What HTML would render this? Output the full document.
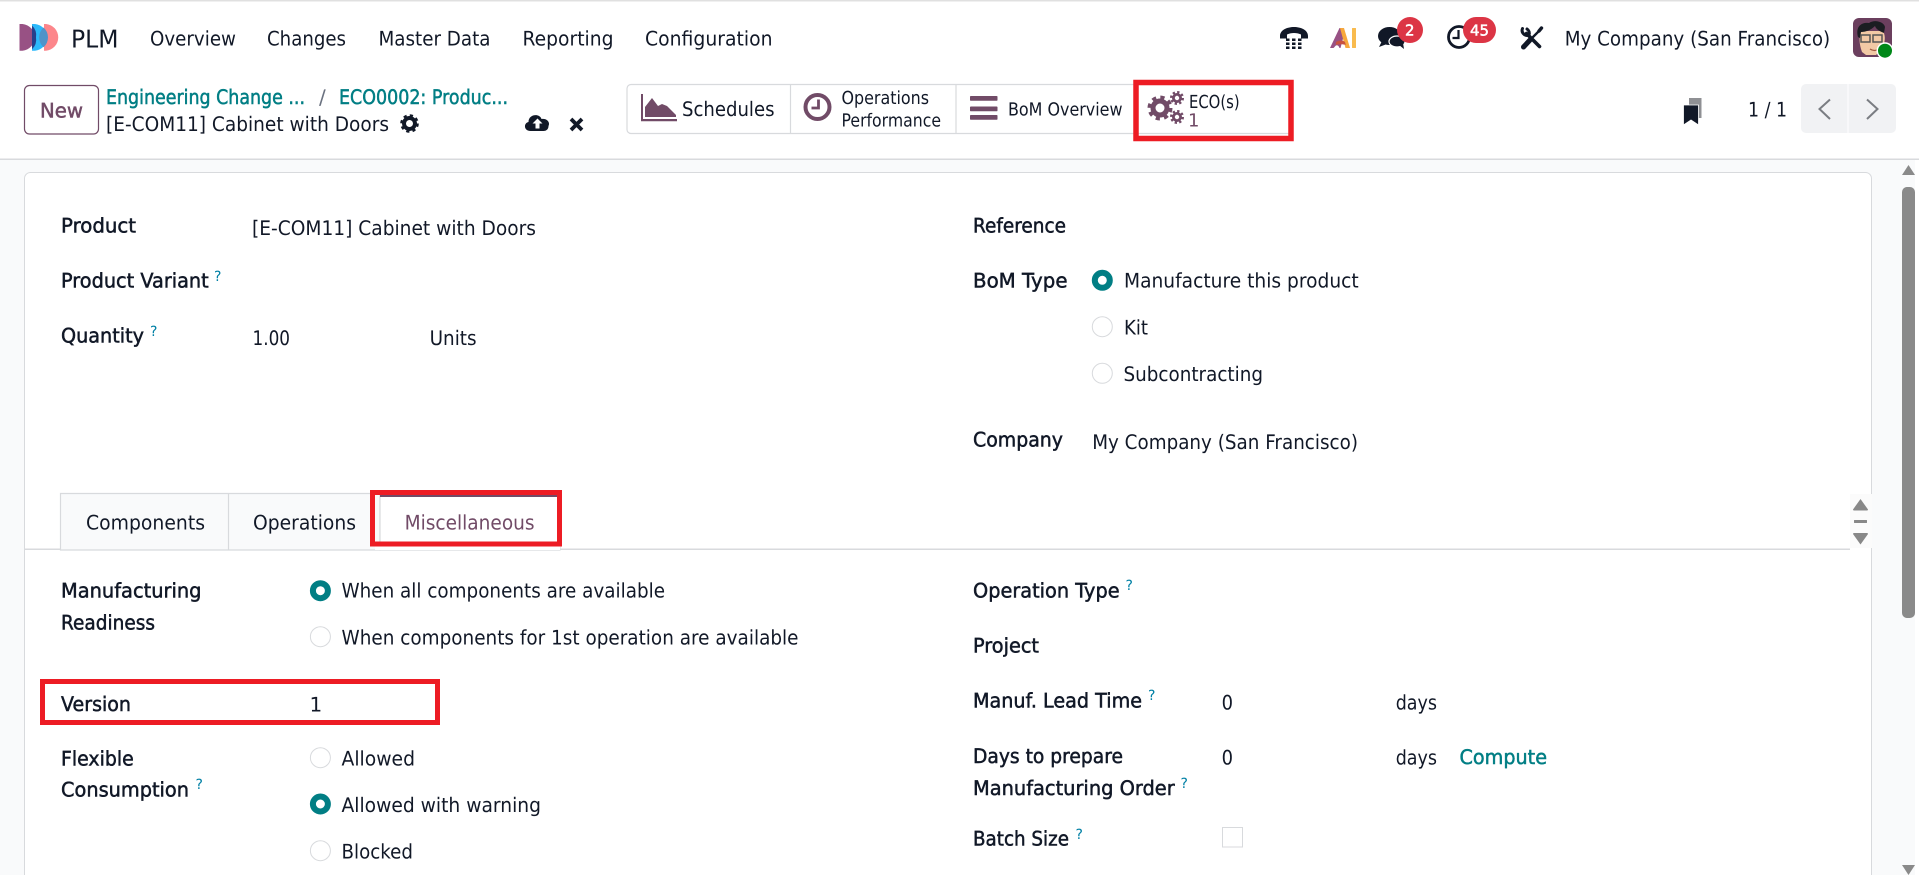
<!DOCTYPE html>
<html lang="en"><head><meta charset="utf-8"><title>PLM</title>
<style>
html,body{margin:0;padding:0;width:1919px;height:875px;overflow:hidden;background:#fff}
svg{display:block}
text{font-family:"DejaVu Sans","Liberation Sans",sans-serif;font-size:20px;fill:#111827;text-rendering:geometricPrecision}
.b{stroke:#111827;stroke-width:.5px}
.t{fill:#017e84;stroke:#017e84;stroke-width:.5px}
.q{font-size:14px;fill:#0180a5;font-weight:normal}
.s{font-size:18px}
</style></head><body>
<svg width="1919" height="875" viewBox="0 0 1919 875" xmlns="http://www.w3.org/2000/svg">
<rect width="1919" height="875" fill="#fff"/>
<rect width="1919" height="1.500" fill="#e0e0e0"/>
<rect y="159" width="1919" height="716" fill="#f9fafb"/>
<rect y="158.500" width="1919" height="1.500" fill="#d8dadd"/>
<rect x="1915" y="160" width="4" height="715" fill="#fff"/>
<!-- card -->
<rect x="24.500" y="172.500" width="1847" height="720" rx="6" fill="#fff" stroke="#d8dadd"/>
<!-- logo -->
<path d="M44 24h2a13.400 13.400 0 0 1 0 26.700h-2z" fill="#fc868b"/>
<path d="M32 24h3a13.400 13.400 0 0 1 0 26.700h-3z" fill="#2cb9fb"/>
<path d="M43.500 27.500a13.400 13.400 0 0 1 4.500 9.900a13.400 13.400 0 0 1-4.500 9.900a13.400 13.400 0 0 1 0-19.800z" fill="#4f93c9"/>
<path d="M19.500 24h3a13.400 13.400 0 0 1 0 26.700h-3z" fill="#985184"/>
<path d="M32 25.500a13.400 13.400 0 0 1 4 11.900a13.400 13.400 0 0 1-4 11.900z" fill="#26408c"/>
<!-- nav -->
<text x="71" y="47.700" style="font-size:24.500px" textLength="47.500" lengthAdjust="spacingAndGlyphs">PLM</text>
<text x="150" y="45.500" textLength="86" lengthAdjust="spacingAndGlyphs">Overview</text>
<text x="267" y="45.500" textLength="79" lengthAdjust="spacingAndGlyphs">Changes</text>
<text x="378.500" y="45.500" textLength="112" lengthAdjust="spacingAndGlyphs">Master Data</text>
<text x="522.500" y="45.500" textLength="91" lengthAdjust="spacingAndGlyphs">Reporting</text>
<text x="645" y="45.500" textLength="127.500" lengthAdjust="spacingAndGlyphs">Configuration</text>
<!-- phone -->
<g fill="#111827"><path d="M1280 36c0-12 28-12 28 0v2.500h-7v-4c-4-2-10-2-14 0v4h-7z"/>
<g><rect x="1286" y="38.500" width="3.500" height="2.500"/><rect x="1292" y="38.500" width="3.500" height="2.500"/><rect x="1298" y="38.500" width="3.500" height="2.500"/><rect x="1286" y="42.500" width="3.500" height="2.500"/><rect x="1292" y="42.500" width="3.500" height="2.500"/><rect x="1298" y="42.500" width="3.500" height="2.500"/><rect x="1286" y="46.500" width="3.500" height="2.500"/><rect x="1292" y="46.500" width="3.500" height="2.500"/><rect x="1298" y="46.500" width="3.500" height="2.500"/></g></g>
<!-- AI -->
<path d="M1339.500 28h4l1 5-4 15h-1c-1-3-3-4-5-1l-1 1h-3.500z" fill="#985184"/>
<path d="M1340 28h4l6 20h-4.500z" fill="#f7a83c"/>
<path d="M1336 42c3-2 7-2 9 0l.800 3c-3-1-7-1-10 0z" fill="#c9533f"/>
<rect x="1352" y="28" width="4" height="20" rx=".5" fill="#f9bb4e"/>
<!-- chat -->
<g fill="#111827"><ellipse cx="1389.500" cy="36" rx="11.500" ry="9"/><path d="M1382 41l-3 6 8-3z"/><ellipse cx="1397" cy="41.500" rx="8" ry="5.500" stroke="#fff" stroke-width="1.200"/><path d="M1399 45l5 4-1-6z"/></g>
<circle cx="1410" cy="30" r="13" fill="#dc3545"/>
<text x="1405" y="35.500" style="font-size:15px;fill:#fff;stroke:#fff;stroke-width:.5px" textLength="9.500" lengthAdjust="spacingAndGlyphs">2</text>
<!-- clock -->
<circle cx="1459" cy="37" r="10.500" fill="#fff" stroke="#111827" stroke-width="2.800"/>
<path d="M1458.500 30v8h-6" fill="none" stroke="#111827" stroke-width="2.200"/>
<rect x="1463" y="17" width="33" height="26" rx="13" fill="#dc3545"/>
<text x="1470" y="35.500" style="font-size:15px;fill:#fff;stroke:#fff;stroke-width:.5px" textLength="19" lengthAdjust="spacingAndGlyphs">45</text>
<!-- tools: wrench + screwdriver -->
<g fill="none" stroke="#111827" stroke-linecap="round">
<path d="M1526.500 33.500l13 13" stroke-width="3.600"/>
<path d="M1522.500 28.500a5 5 0 0 0 6.500 6.500" stroke-width="3"/>
<path d="M1529 35a5 5 0 0 0-2-6" stroke-width="3"/>
<path d="M1532.500 37.500l7-7" stroke-width="2.400"/>
<path d="M1539 31l2.500-3" stroke-width="3.400"/>
<path d="M1523.500 47l6.500-7" stroke-width="5"/>
</g>
<text x="1564.700" y="45.500" textLength="265.500" lengthAdjust="spacingAndGlyphs">My Company (San Francisco)</text>
<!-- avatar -->
<rect x="1853" y="18" width="39" height="39" rx="6" fill="#6b3f5e"/>
<path d="M1862 52c-3-8-3-15-1-21h22c3 5 2 12-1 18l-6 6h-10z" fill="#f2c9a5"/>
<path d="M1858 37c-3-12 5-15 11-14 6-4 15-1 16 4l-1 6c-5-2-8-4-9-7-4 4-9 6-14 6l-1 6z" fill="#1b1d22"/>
<g fill="none" stroke="#555" stroke-width="1.500"><rect x="1861" y="35" width="9" height="7"/><rect x="1873" y="35" width="9" height="7"/></g>
<path d="M1870 49c3 2 6 2 9 0" fill="none" stroke="#a05a3e" stroke-width="1.300"/>
<circle cx="1885" cy="50.700" r="8.500" fill="#fff"/><circle cx="1885" cy="50.700" r="7" fill="#008818"/>
<!-- new button -->
<rect x="24.500" y="85.500" width="74" height="48.500" rx="5" fill="#fff" stroke="#714b67" stroke-width="1.200"/>
<text x="40" y="117.500" style="fill:#714b67;stroke:#714b67;stroke-width:.5px" textLength="43" lengthAdjust="spacingAndGlyphs">New</text>
<!-- breadcrumb -->
<text class="t" x="106" y="104" textLength="199" lengthAdjust="spacingAndGlyphs">Engineering Change ...</text>
<text x="319" y="104" style="fill:#6b7280">/</text>
<text class="t" x="339" y="104" textLength="169" lengthAdjust="spacingAndGlyphs">ECO0002: Produc...</text>
<text x="106" y="131" textLength="283" lengthAdjust="spacingAndGlyphs">[E-COM11] Cabinet with Doors</text>
<circle cx="409.500" cy="123.500" r="5.500" fill="none" stroke="#111827" stroke-width="4"/>
<circle cx="409.500" cy="123.500" r="7.800" fill="none" stroke="#111827" stroke-width="3" stroke-dasharray="3.100 3.030"/>
<!-- cloud upload -->
<path d="M530.500 131c-7 0-7-8-2-9 0-8 11-9 13-3 5-1 9 3 7 7 0 3-2 5-5 5z" fill="#111827"/>
<path d="M537.500 118.500l-5 5h3v5h4v-5h3z" fill="#fff"/>
<path d="M571 119l11 11m0-11l-11 11" stroke="#111827" stroke-width="3.800" fill="none"/>
<!-- stat buttons -->
<path d="M631 84.500h660v49h-660a4 4 0 0 1-4-4v-41a4 4 0 0 1 4-4z" fill="#fff" stroke="#d8dadd" stroke-width="1.200"/>
<path d="M790.500 85v48M956 85v48" stroke="#d8dadd" stroke-width="1.200"/>
<g fill="#714b67"><path d="M641 94h2v25h34v2.300h-36z"/><path d="M645 117v-10l7-9 6 8 4-2 5 2 9 9v2z"/></g>
<text x="682" y="116" textLength="92.500" lengthAdjust="spacingAndGlyphs">Schedules</text>
<circle cx="817.500" cy="107" r="12" fill="#fff" stroke="#714b67" stroke-width="4"/>
<path d="M818.500 99.500v8.500h-7" fill="none" stroke="#714b67" stroke-width="2.800"/>
<text class="s" x="841.500" y="104" textLength="87.500" lengthAdjust="spacingAndGlyphs">Operations</text>
<text class="s" x="841.500" y="126.700" textLength="99.500" lengthAdjust="spacingAndGlyphs">Performance</text>
<g fill="#714b67"><rect x="970" y="96" width="27.500" height="4.800" rx=".8"/><rect x="970" y="106.500" width="27.500" height="4.800" rx=".8"/><rect x="970" y="115" width="27.500" height="4.800" rx=".8"/></g>
<text class="s" x="1008" y="115.700" textLength="114.500" lengthAdjust="spacingAndGlyphs">BoM Overview</text>
<!-- gears -->
<g fill="none" stroke="#714b67">
<circle cx="1160" cy="108" r="7" stroke-width="5"/><circle cx="1160" cy="108" r="10.500" stroke-width="4" stroke-dasharray="4.100 4.150"/>
<circle cx="1177" cy="98" r="3.600" stroke-width="2.800"/><circle cx="1177" cy="98" r="5.800" stroke-width="2.400" stroke-dasharray="2.300 2.250"/>
<circle cx="1177" cy="117" r="3.600" stroke-width="2.800"/><circle cx="1177" cy="117" r="5.800" stroke-width="2.400" stroke-dasharray="2.300 2.250"/>
</g>
<text class="s" x="1189" y="108" textLength="50.600" lengthAdjust="spacingAndGlyphs">ECO(s)</text>
<text class="s" x="1188" y="126.700" style="fill:#714b67">1</text>
<rect x="1136" y="82.500" width="155" height="56" fill="none" stroke="#ed1c24" stroke-width="5.500"/>
<!-- pager -->
<path d="M1689 98h12.500v20h-12.500z" fill="#8f9094"/>
<path d="M1683.500 105h15v20l-7.500-5-7.500 5z" fill="#111827" stroke="#fff" stroke-width=".8"/>
<text x="1748" y="116.700" textLength="39" lengthAdjust="spacingAndGlyphs">1 / 1</text>
<rect x="1801" y="84" width="95" height="49" rx="5" fill="#f1f2f4"/>
<rect x="1847.500" y="84" width="1" height="49" fill="#fff"/>
<path d="M1830 99.500l-10.500 9.500 10.500 10" fill="none" stroke="#7a7d82" stroke-width="2"/>
<path d="M1867 99.500l10.500 9.500-10.500 10" fill="none" stroke="#7a7d82" stroke-width="2"/>
<!-- top form left -->
<text class="b" x="61" y="232.700" textLength="75" lengthAdjust="spacingAndGlyphs">Product</text>
<text x="252" y="235" textLength="284" lengthAdjust="spacingAndGlyphs">[E-COM11] Cabinet with Doors</text>
<text class="b" x="61" y="287.300" textLength="147.700" lengthAdjust="spacingAndGlyphs">Product Variant</text>
<text class="q" x="214" y="281">?</text>
<text class="b" x="61" y="342.700" textLength="83" lengthAdjust="spacingAndGlyphs">Quantity</text>
<text class="q" x="150" y="336">?</text>
<text x="252.500" y="345" textLength="37.500" lengthAdjust="spacingAndGlyphs">1.00</text>
<text x="429.600" y="345" textLength="47" lengthAdjust="spacingAndGlyphs">Units</text>
<!-- top form right -->
<text class="b" x="973" y="232.700" textLength="93" lengthAdjust="spacingAndGlyphs">Reference</text>
<text class="b" x="973" y="287.700" textLength="94.500" lengthAdjust="spacingAndGlyphs">BoM Type</text>
<circle cx="1102.300" cy="280.300" r="7.500" fill="#fff" stroke="#017e84" stroke-width="6"/>
<text x="1124" y="287.700" textLength="234.700" lengthAdjust="spacingAndGlyphs">Manufacture this product</text>
<circle cx="1102.300" cy="326.700" r="10" fill="#fff" stroke="#d8dadd"/>
<text x="1124" y="334.700" textLength="24" lengthAdjust="spacingAndGlyphs">Kit</text>
<circle cx="1102.300" cy="373.300" r="10" fill="#fff" stroke="#d8dadd"/>
<text x="1123.500" y="381" textLength="139.500" lengthAdjust="spacingAndGlyphs">Subcontracting</text>
<text class="b" x="973" y="446.700" textLength="90" lengthAdjust="spacingAndGlyphs">Company</text>
<text x="1092.200" y="449" textLength="265.800" lengthAdjust="spacingAndGlyphs">My Company (San Francisco)</text>
<!-- tabs -->
<rect x="25" y="548.500" width="1825" height="1.500" fill="#d8dadd"/>
<path d="M60.500 550v-56.500h319.500v56.500z" fill="#f9fafb" stroke="#d8dadd" stroke-width="1.200"/>
<path d="M228.500 494v56" stroke="#d8dadd" stroke-width="1.200"/>
<path d="M380 550v-56.500h180v56.500z" fill="#fff" stroke="#d8dadd" stroke-width="1.200"/>
<rect x="375" y="546" width="185" height="4" fill="#fff"/>
<rect x="380" y="494" width="180" height="3" fill="#714b67"/>
<text x="86" y="529.500" textLength="119" lengthAdjust="spacingAndGlyphs">Components</text>
<text x="253" y="529.500" textLength="103" lengthAdjust="spacingAndGlyphs">Operations</text>
<text x="404.600" y="529.500" style="fill:#714b67" textLength="130" lengthAdjust="spacingAndGlyphs">Miscellaneous</text>
<rect x="372.500" y="492.500" width="187" height="51.500" fill="none" stroke="#ed1c24" stroke-width="5"/>
<!-- lower left -->
<text class="b" x="61" y="597.600" textLength="140.500" lengthAdjust="spacingAndGlyphs">Manufacturing</text>
<text class="b" x="61" y="629.500" textLength="94" lengthAdjust="spacingAndGlyphs">Readiness</text>
<circle cx="320.400" cy="590.700" r="7.500" fill="#fff" stroke="#017e84" stroke-width="6"/>
<text x="341.500" y="597.600" textLength="323.500" lengthAdjust="spacingAndGlyphs">When all components are available</text>
<circle cx="320.400" cy="636.700" r="10" fill="#fff" stroke="#d8dadd"/>
<text x="341.500" y="644.300" textLength="457" lengthAdjust="spacingAndGlyphs">When components for 1st operation are available</text>
<text class="b" x="61" y="711" textLength="70" lengthAdjust="spacingAndGlyphs">Version</text>
<text x="309.500" y="711.500">1</text>
<rect x="42.500" y="681.500" width="395" height="41" fill="none" stroke="#ed1c24" stroke-width="5"/>
<text class="b" x="61" y="765.400" textLength="72.700" lengthAdjust="spacingAndGlyphs">Flexible</text>
<text class="b" x="61" y="796.600" textLength="128" lengthAdjust="spacingAndGlyphs">Consumption</text>
<text class="q" x="195.500" y="789">?</text>
<circle cx="320.400" cy="757.700" r="10" fill="#fff" stroke="#d8dadd"/>
<text x="341.500" y="765.400" textLength="73.500" lengthAdjust="spacingAndGlyphs">Allowed</text>
<circle cx="320.400" cy="804" r="7.500" fill="#fff" stroke="#017e84" stroke-width="6"/>
<text x="341.500" y="812" textLength="199.500" lengthAdjust="spacingAndGlyphs">Allowed with warning</text>
<circle cx="320.400" cy="850.700" r="10" fill="#fff" stroke="#d8dadd"/>
<text x="341.500" y="858.300" textLength="71.500" lengthAdjust="spacingAndGlyphs">Blocked</text>
<!-- lower right -->
<text class="b" x="973" y="597.600" textLength="146.600" lengthAdjust="spacingAndGlyphs">Operation Type</text>
<text class="q" x="1125.500" y="590">?</text>
<text class="b" x="973" y="652.700" textLength="66" lengthAdjust="spacingAndGlyphs">Project</text>
<text class="b" x="973" y="707.700" textLength="169" lengthAdjust="spacingAndGlyphs">Manuf. Lead Time</text>
<text class="q" x="1148" y="700">?</text>
<text x="1221.600" y="709.300" textLength="11.400" lengthAdjust="spacingAndGlyphs">0</text>
<text x="1395.700" y="709.300" textLength="41.300" lengthAdjust="spacingAndGlyphs">days</text>
<text class="b" x="973" y="763" textLength="150" lengthAdjust="spacingAndGlyphs">Days to prepare</text>
<text x="1221.600" y="764.300" textLength="11.400" lengthAdjust="spacingAndGlyphs">0</text>
<text x="1395.700" y="764.300" textLength="41.300" lengthAdjust="spacingAndGlyphs">days</text>
<text class="t" x="1459.500" y="764" textLength="87.500" lengthAdjust="spacingAndGlyphs">Compute</text>
<text class="b" x="973" y="795" textLength="201.700" lengthAdjust="spacingAndGlyphs">Manufacturing Order</text>
<text class="q" x="1180.500" y="788">?</text>
<text class="b" x="973" y="845.700" textLength="96" lengthAdjust="spacingAndGlyphs">Batch Size</text>
<text class="q" x="1075.500" y="839">?</text>
<rect x="1222.500" y="827.500" width="20" height="19.500" fill="#fff" stroke="#d8dadd"/>
<!-- tab arrows -->
<rect x="1850" y="494" width="22" height="54" fill="#fbfbfb"/>
<g fill="#888"><path d="M1860.500 499l7.500 10.500q0 1-1 1h-13q-1 0-1-1z"/><rect x="1854" y="520" width="13" height="3" rx=".5"/><path d="M1860.500 544.500l7.500-10.500q0-1-1-1h-13q-1 0-1 1z"/></g>
<!-- page scrollbar -->
<rect x="1902" y="187" width="13" height="431" rx="5" fill="#8a8a8a"/>
<g fill="#8a8a8a"><path d="M1908.500 165l6.500 10h-13z"/><path d="M1908.500 875l6.500-10h-13z"/></g>
</svg>
</body></html>
